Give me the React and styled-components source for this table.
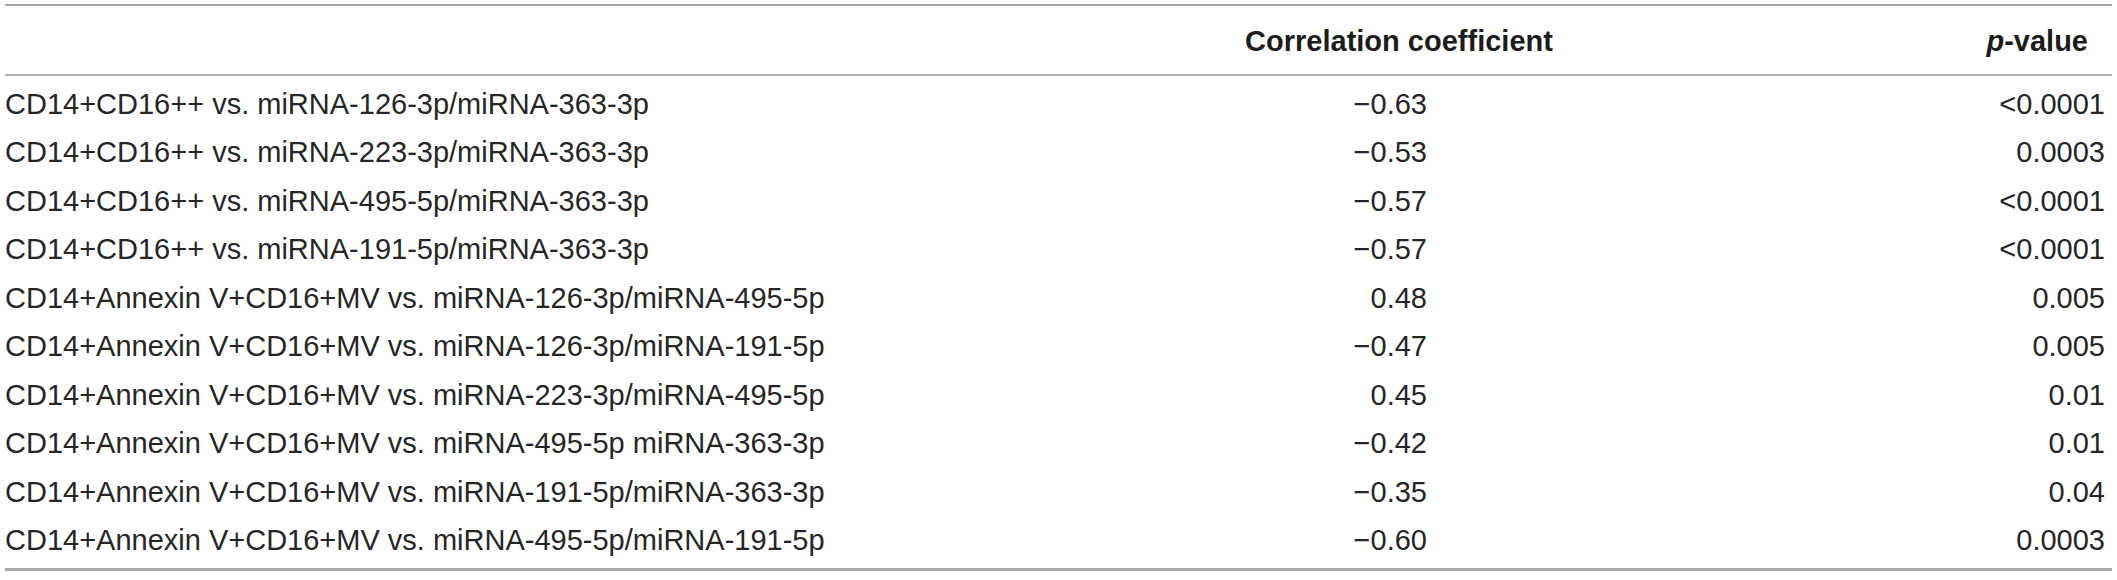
import React from "react";
import styled, { createGlobalStyle } from "styled-components";

const GlobalStyle = createGlobalStyle`
  html, body {
    margin: 0;
    padding: 0;
    background: #ffffff;
  }
  body {
    font-family: "Liberation Sans", Arial, Helvetica, sans-serif;
    color: #262626;
  }
`;

const Frame = styled.div`
  margin: 4px 5px 0;
  border-top: 2px solid #a3a3a3;
  border-bottom: 3px solid #a8a8a8;
`;

const HeadRow = styled.div`
  display: grid;
  grid-template-columns: 1240px 308px 1fr;
  align-items: center;
  box-sizing: border-box;
  height: 70px;
  padding-top: 3px;
  border-bottom: 2px solid #b0b0b0;
  font-weight: 700;
  font-size: 29px;
  color: #1c1c1c;
`;

const Body = styled.div`
  padding: 4px 0 3px;
`;

const Row = styled.div`
  display: grid;
  grid-template-columns: 1240px 308px 1fr;
  align-items: center;
  height: 48.5px;
  font-size: 29px;
  font-weight: 400;
`;

const Cell = styled.div`
  white-space: nowrap;
  text-align: ${(p) => p.$align || "left"};
  padding-right: ${(p) => p.$pr || 0}px;
`;

const Em = styled.i`
  font-style: italic;
`;

const rows = [
  ["CD14+CD16++ vs. miRNA-126-3p/miRNA-363-3p", "\u22120.63", "<0.0001"],
  ["CD14+CD16++ vs. miRNA-223-3p/miRNA-363-3p", "\u22120.53", "0.0003"],
  ["CD14+CD16++ vs. miRNA-495-5p/miRNA-363-3p", "\u22120.57", "<0.0001"],
  ["CD14+CD16++ vs. miRNA-191-5p/miRNA-363-3p", "\u22120.57", "<0.0001"],
  ["CD14+Annexin V+CD16+MV vs. miRNA-126-3p/miRNA-495-5p", "0.48", "0.005"],
  ["CD14+Annexin V+CD16+MV vs. miRNA-126-3p/miRNA-191-5p", "\u22120.47", "0.005"],
  ["CD14+Annexin V+CD16+MV vs. miRNA-223-3p/miRNA-495-5p", "0.45", "0.01"],
  ["CD14+Annexin V+CD16+MV vs. miRNA-495-5p miRNA-363-3p", "\u22120.42", "0.01"],
  ["CD14+Annexin V+CD16+MV vs. miRNA-191-5p/miRNA-363-3p", "\u22120.35", "0.04"],
  ["CD14+Annexin V+CD16+MV vs. miRNA-495-5p/miRNA-191-5p", "\u22120.60", "0.0003"],
];

export default function App() {
  return (
    <>
      <GlobalStyle />
      <Frame>
        <HeadRow>
          <Cell />
          <Cell $align="center">Correlation coefficient</Cell>
          <Cell $align="right" $pr={24}>
            <Em>p</Em>-value
          </Cell>
        </HeadRow>
        <Body>
          {rows.map(([label, r, p]) => (
            <Row key={label}>
              <Cell>{label}</Cell>
              <Cell $align="right" $pr={126}>{r}</Cell>
              <Cell $align="right" $pr={7}>{p}</Cell>
            </Row>
          ))}
        </Body>
      </Frame>
    </>
  );
}
